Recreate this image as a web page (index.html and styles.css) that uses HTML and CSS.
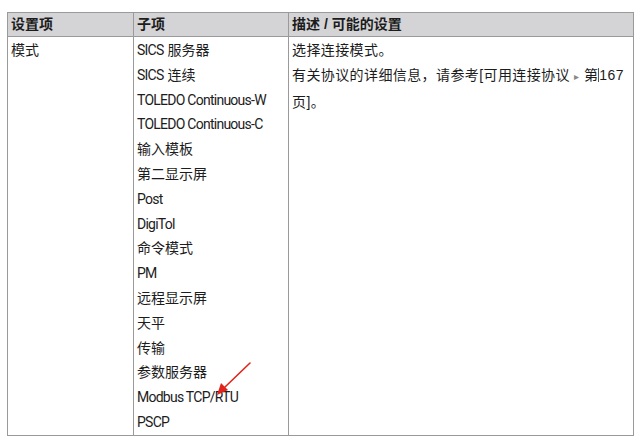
FILE: index.html
```html
<!DOCTYPE html>
<html lang="zh">
<head>
<meta charset="utf-8">
<link rel="stylesheet" href="styles.css">
</head>
<body>
<div class="page">
  <table class="spec">
    <thead>
      <tr>
        <th class="c1">设置项</th>
        <th class="c2">子项</th>
        <th class="c3">描述 / 可能的设置</th>
      </tr>
    </thead>
    <tbody>
      <tr>
        <td class="c1">模式</td>
        <td class="c2">
          <div class="item"><span class="lat">SICS</span> 服务器</div>
          <div class="item"><span class="lat">SICS</span> 连续</div>
          <div class="item lat">TOLEDO Continuous-W</div>
          <div class="item lat">TOLEDO Continuous-C</div>
          <div class="item">输入模板</div>
          <div class="item">第二显示屏</div>
          <div class="item lat">Post</div>
          <div class="item lat">DigiTol</div>
          <div class="item">命令模式</div>
          <div class="item lat">PM</div>
          <div class="item">远程显示屏</div>
          <div class="item">天平</div>
          <div class="item">传输</div>
          <div class="item">参数服务器</div>
          <div class="item lat modbus">Modbus TCP/RTU<svg class="arrow" width="40" height="36" viewBox="0 0 40 36"><path d="M36 2 L11 26" stroke="#e0231b" stroke-width="1.6" fill="none" stroke-linecap="round"/><path d="M3 34 L7 22 L14 29 Z" fill="#e0231b"/></svg></div>
          <div class="item lat">PSCP</div>
        </td>
        <td class="c3">
          <p>选择连接模式。</p>
          <p>有关协议的详细信息，请参考[可用连接协议 <span class="tri">&#9656;</span> 第<span class="caret"></span>167 页]。</p>
        </td>
      </tr>
    </tbody>
  </table>
</div>
</body>
</html>
```

FILE: styles.css
```css
html, body {
  margin: 0;
  padding: 0;
  background: #ffffff;
}
.page {
  padding: 12px 6px 0 7px;
}
.spec {
  width: 627px;
  border-collapse: collapse;
  font-family: "Liberation Sans", "Noto Sans CJK SC", sans-serif;
  font-size: 14px;
  color: #1c1c1c;
  table-layout: fixed;
}
.spec th, .spec td {
  border: 1px solid #9a9a9a;
  text-align: left;
  vertical-align: top;
  padding: 0 3px;
}
.spec th {
  background: #d4d4d6;
  font-weight: bold;
  height: 23px;
  line-height: 23px;
}
.spec td {
  line-height: 24.8px;
  padding-top: 1px;
  padding-bottom: 0;
  height: 396px;
}
.c1 { width: 119px; }
.c2 { width: 148px; }
.c3 { width: auto; }
.spec .c3 p {
  margin: 0;
}
.spec td.c3 {
  letter-spacing: 0.4px;
}
.item {
  white-space: nowrap;
  height: 24.8px;
}
.lat {
  font-family: Roboto, "Noto Sans CJK SC", sans-serif;
  letter-spacing: -0.75px;
}
.modbus {
  position: relative;
}
.arrow {
  position: absolute;
  left: 77px;
  top: -24px;
}
.tri {
  color: #888;
  font-size: 10px;
}
.caret {
  display: inline-block;
  width: 1px;
  height: 14px;
  background: #555;
  vertical-align: -2px;
}
```
